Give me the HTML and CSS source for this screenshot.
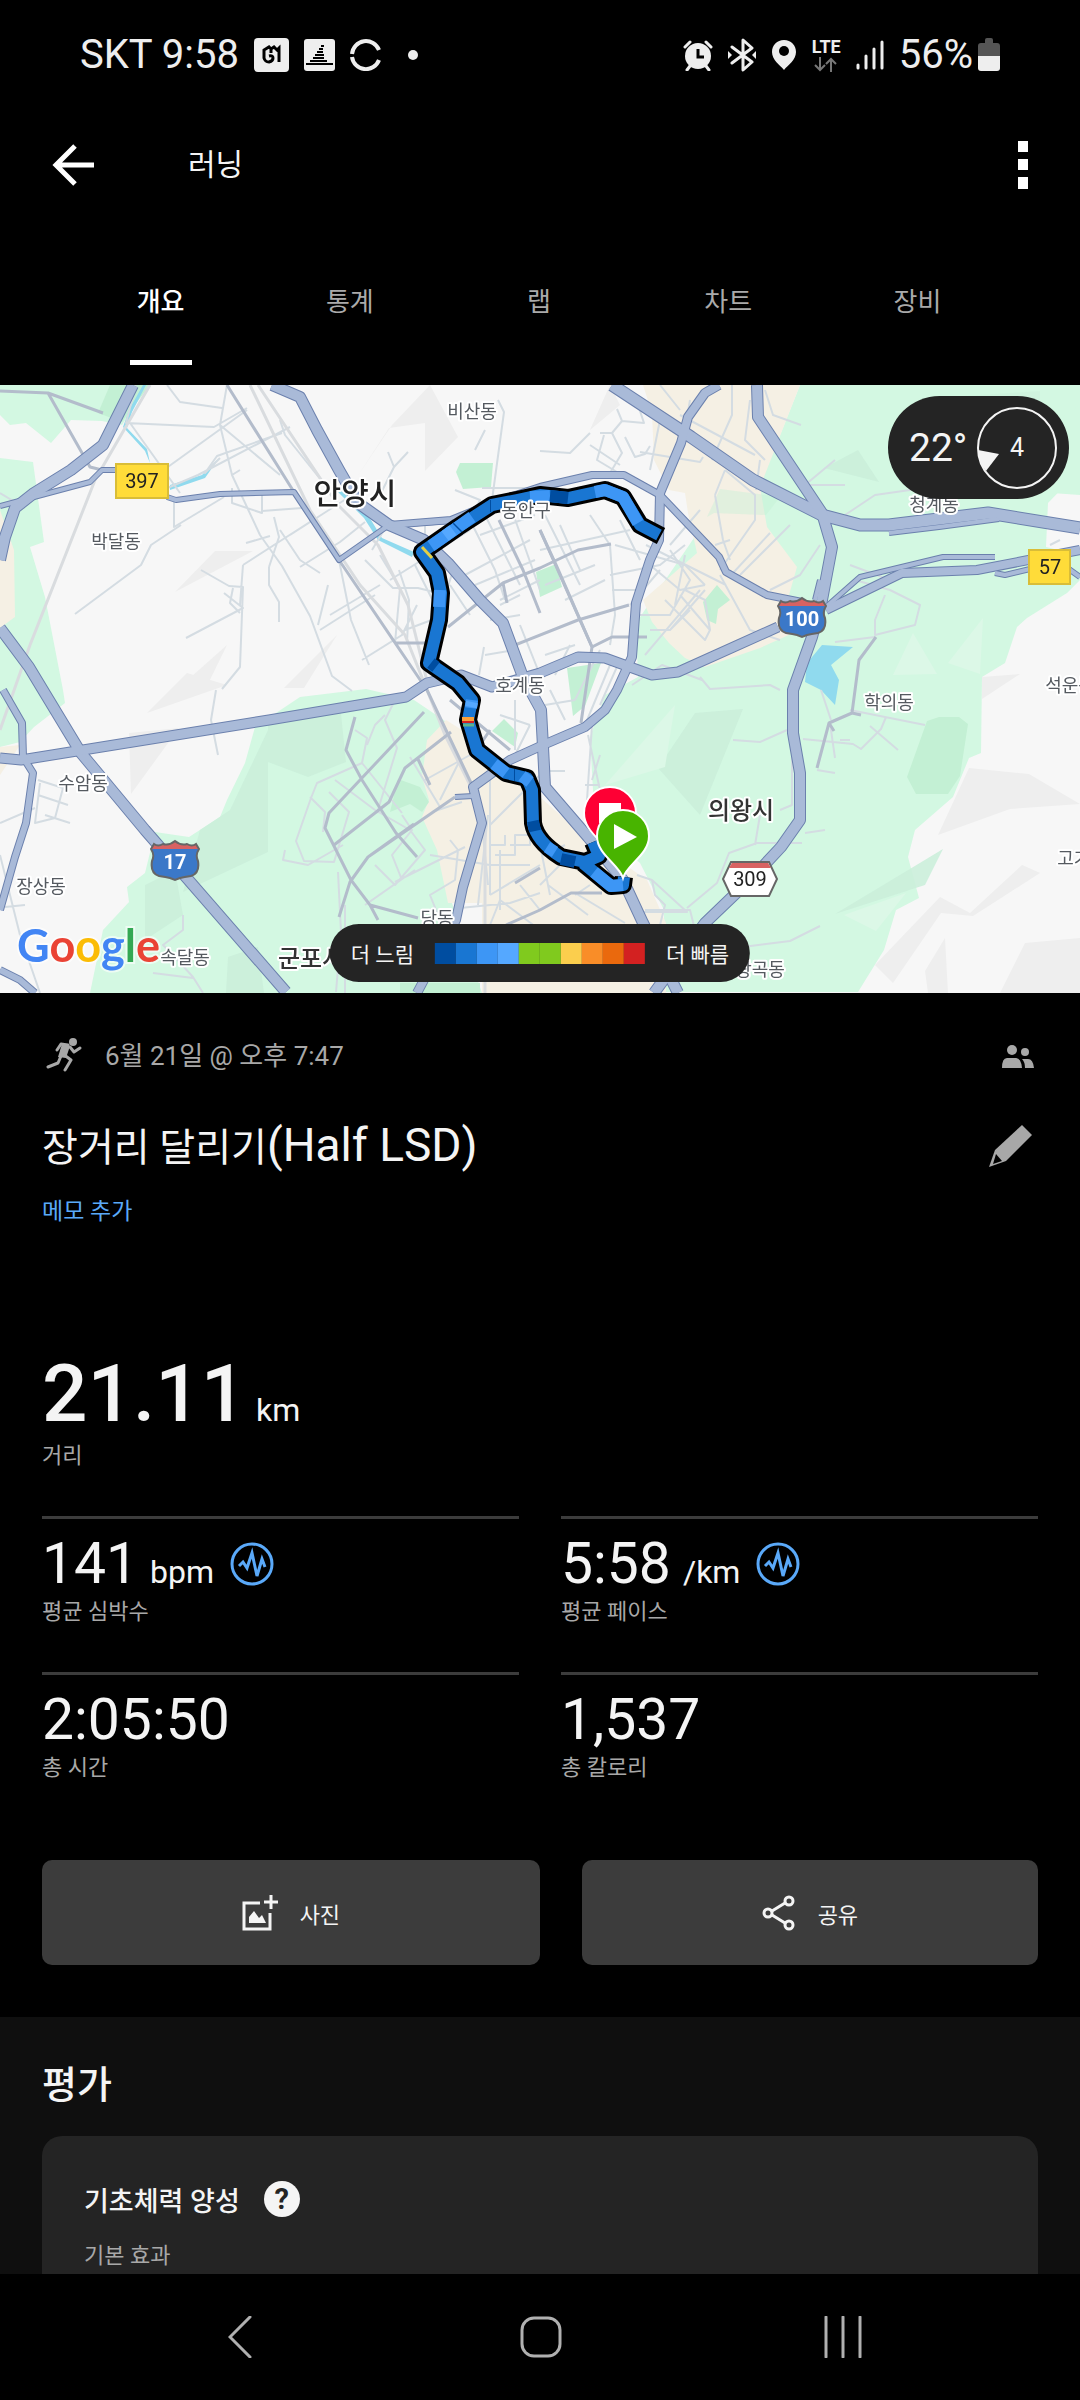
FILE: index.html
```html
<!DOCTYPE html>
<html lang="ko">
<head>
    <meta charset="UTF-8">
    <meta name="viewport" content="width=device-width, initial-scale=1.0">
    <title>러닝</title>
    <link rel="stylesheet" href="styles.css">
</head>
<body>

    <!-- 상태 표시줄 -->
    <div class="status-bar">
        <div class="status-left">
            <span class="status-text">SKT 9:58</span>
            <svg width="35" height="34" viewBox="0 0 35 34"><rect width="35" height="34" rx="4" fill="#eee"/><path d="M17 15v-4l-2-2-5 3v8q1 4 5 4 4-1 4-4t-4-2M17 11l3-2 3 3 2-2v14" fill="none" stroke="#000" stroke-width="3"/></svg>
            <svg width="31" height="32" viewBox="0 0 31 32"><rect width="31" height="32" rx="3" fill="#eee"/><path d="M17 7h3M15 10h4M13 13h6M11 16h9M9 19h11M6 22h17M2 25h27" stroke="#000" stroke-width="2"/></svg>
            <svg width="32" height="32" viewBox="0 0 32 32"><path d="M2 15a14 14 0 0 1 27-4M2 18a14 14 0 0 0 27 3" fill="none" stroke="#eee" stroke-width="4"/></svg>
            <span class="status-dot"></span>
        </div>
        <div class="status-right">
            <svg width="30" height="32" viewBox="0 0 30 32"><circle cx="15" cy="17" r="13" fill="#eee"/><path d="M2 8l5-5M28 8l-5-5M7 27l-3 4M23 27l3 4" stroke="#eee" stroke-width="3" stroke-linecap="round"/><path d="M15 10v8h6" fill="none" stroke="#000" stroke-width="3"/></svg>
            <svg width="28" height="34" viewBox="0 0 28 34"><path d="M4 9l20 15-9 8V2l9 8L4 25" fill="none" stroke="#eee" stroke-width="3" stroke-linejoin="round" stroke-linecap="round"/><path d="M0 13l4 4-4 4zM28 13l-4 4 4 4z" fill="#eee"/></svg>
            <svg width="26" height="32" viewBox="0 0 26 32"><path d="M13 1C6 1 1 6 1 13c0 8 8 13 12 18 4-5 12-10 12-18C25 6 20 1 13 1z" fill="#eee"/><circle cx="13" cy="12" r="5" fill="#000"/></svg>
            <span class="lte">LTE
                <svg width="24" height="15" viewBox="0 0 24 15"><path d="M6 0v13M1 8l5 5 5-5M17 15V2M12 7l5-5 5 5" fill="none" stroke="#777" stroke-width="2"/></svg>
            </span>
            <svg width="28" height="30" viewBox="0 0 28 30"><path d="M2 25v3M10 16v12M18 9v19M26 2v26" stroke="#eee" stroke-width="3" stroke-linecap="round"/></svg>
            <span class="status-text">56%</span>
            <svg class="battery" width="22" height="34" viewBox="0 0 22 34"><path d="M7 5V2q0-2 2-2h4q2 0 2 2v3h4q3 0 3 3v10H0V8q0-3 3-3z" fill="#555"/><path d="M0 18h22v12q0 3-3 3H3q-3 0-3-3z" fill="#eee"/></svg>
        </div>
    </div>

    <!-- 상단 바 -->
    <header class="app-bar">
        <button class="icon-button" aria-label="뒤로">
            <svg width="42" height="42" viewBox="0 0 42 42"><path d="M23 2L4 21l19 19M4 21h38" fill="none" stroke="#fff" stroke-width="5"/></svg>
        </button>
        <h1>러닝</h1>
        <button class="icon-button" aria-label="더 보기">
            <svg width="10" height="48" viewBox="0 0 10 48"><path d="M0 0h10v11H0zM0 18h10v11H0zM0 36h10v12H0z" fill="#fff"/></svg>
        </button>
    </header>

    <nav class="tabs">
        <button class="tab active">개요</button>
        <button class="tab">통계</button>
        <button class="tab">랩</button>
        <button class="tab">차트</button>
        <button class="tab">장비</button>
    </nav>

    <main>
        <!-- 지도 -->
        <div class="map">
            <svg class="map-canvas" viewBox="0 0 1080 608">
                <defs>
                    <symbol id="shield" viewBox="0 0 50 44">
                        <path d="M4 6q4 3 9 0q6 2 12-3q6 5 12 3q5 3 9 0l3 5q-4 6-1 12q2 12-7 15q-7 1-11 2l-5 2-5-2q-4-1-11-2Q0 35 2 23q3-6-1-12z" fill="#3b78c8"/>
                        <path d="M4 6q4 3 9 0q6 2 12-3q6 5 12 3q5 3 9 0l3 5H1z" fill="#d86262"/>
                        <path d="M4 6q4 3 9 0q6 2 12-3q6 5 12 3q5 3 9 0l3 5q-4 6-1 12q2 12-7 15q-7 1-11 2l-5 2-5-2q-4-1-11-2Q0 35 2 23q3-6-1-12z" fill="none" stroke="#666" stroke-width="2"/>
                    </symbol>
                </defs>

                <rect width="1080" height="608" fill="#f7f7f7"/>

                <!-- 녹지 -->
                <g fill="#d3f8e2">
                    <path d="M0 0h148l-26 40-20-4-31-1-20 23-25-20-16 2-10-10z"/>
                    <path d="M0 73l33 4 11 80-14 5 15 50 18 93 2 13-31 24-14 15-20 5z"/>
                    <path d="M300 312l-45 30-10 36-18 37-7 17-31 20-34-5-10 41-18 14 2 15-26 28-13 63h392l-30-90-11-53-15-33 7-17-7-23 5-37 17-17-34-23-48-11z"/>
                    <path d="M800 0h280v85l-32 33-2 44 34 8v25l-13 13-40 25-10 9-12 36-23 14-1 76-12 5-16 39-38 33-7 27 11 41-23 12-12 40-26 42H664V525l-24-47-45-38-5-88 15-42 33-18-2-54 60-88 60-40z"/>
                    <path d="M912 138l26-38 142 10v-90z"/>
                </g>
                <g fill="#f5f0e4">
                    <path d="M0 125l14 40 1 67-15 11zM0 362l20-2-20 30z"/>
                    <path d="M643 0h157l-40 102 7 40 30 40-8 28 11 35-40 18-55 19-20-9-16-15-17-21-9-22 54-47-9-40-3-20-16-3-15-30-2-47z"/>
                    <path d="M446 335l24 15 30 35 40 27 45 40 62 43 19 43v70H482V518h-34l-11-53-15-33 7-17-7-23 5-37z"/>
                </g>
                <g fill="#c3f0d4">
                    <path d="M110 0h40l-28 37-24-9z"/>
                    <path d="M456 87l4-9h33l-2 24-28 2z"/>
                    <path d="M703 217l14-17 13 15-12 9-2 15-9-4zM567 283l34-5-16 43-12 10zM492 346l12-12 14 14-3 14zM398 394l22 8 9 15-7 10-12-8-20 8z"/>
                    <path d="M927 336l12-4h20l9 7-8 52-12 18h-32l-9-17zM400 598h80v10h-80zM536 187l20-8 6 23-22 10z"/>
                    <path d="M720 104l60 8-14 18-52-2-7 4z" opacity=".4"/>
                </g>
                <g fill="#cbefdb" opacity=".9">
                    <path d="M268 337l72-18 6 58-38 15-40-15zM268 345v122l-85 40 17-62 30-20z"/>
                    <path d="M695 328l48-4-43 106-42-47zM824 83l34-18 21 32z"/>
                    <path d="M835 529l108-65-18 36zM145 500l30-15 8 45-38 25zM228 572l30-10 6 46h-38z"/>
                    <path d="M950 12l90-6v40l-70 20z" opacity=".5"/>
                </g>
                <g fill="#eee">
                    <path d="M392 40l38-40 28 52-33 34V38l-36 5-32 49zM175 207l40-41h38zM275 348l-5-18zM337 250l-33 53h-20zM182 300l45-40-22 45zM147 328l40-40 40 12z"/>
                    <path d="M129 348l50-5-48 66zM590 45l20-45 10 20zM938 450l31-67 60 6 51 30-70 5zM875 580l65-68 30 16 52-48 18 8-67 43-32-3-48 70zM1000 608l25-50 55-5v55zM925 586l20-33 3 55h-20zM982 292l38-3-38 25z"/>
                </g>
                <g fill="#dcf8e7">
                    <path d="M605 400l70-80-10 62zM893 290l20-42 24 41zM948 278l35-45-3 56zM844 530l62-22-30 38z"/>
                </g>
                <g fill="#90daee">
                    <path d="M822 260l31 2-22 18 8 15-4 25-14-15-16-8 2-19z"/>
                    <path d="M143 0l-14 25-6 17 22 24 5 12-3-14-20-21 5-16 14-27zM170 100l32-10 17-17-14 20-35 12zM341 105l30 30 11 18 32 14-2 5-34-17-14-22-28-28z"/>
                </g>

                <!-- 골목길 -->
                <g class="road-minor">
                    <path d="M0 108l25 15M130 38l50 70M136 0l-10 38 88 4 33-19M167 0l13 17 42 6M227 0l-7 40 12 50 28 60 22 31 28 50 22 60 20 15M220 40l60 50M247 25l-100 72M282 48l-65 23-12 17 15-15M290 42l-92 48-47 20M280 35l5 15 40 50M174 115v27l50-30M75 229l66-49 10-20 30-20M246 158l24-7M186 253l57-30-19-15M201 185l28 16 14 1-3 80-18 22M243 180l70-45M243 180l-3 40M233 203l-3 15 10 10M269 182l10-30-5-20M269 182v18l10 17v20M232 90l8-5M262 108v20l-30-10v-15M262 126l40-3M280 145l20 30 20 13M290 150l70-45M300 182l40-25 25-20M318 240l10-40M330 230l50-30M320 245l55-35M339 175l12 60 18 45M362 275l40-25 15-30M380 170l20 33-5 55M372 165l15-25M390 195l80-50M399 185l10 30-2 43M405 245l40-15M415 180l30 60M425 135v20M365 175l28 28h25l20 5"/>
                    <path d="M498 15l6 12-12 88M475 65l10-20M388 67l6 15 14-15M394 82l-14 28M482 103h58M455 105l25 10-10 20M470 135l25 50 10 30M485 130l35 70M465 190l65-35M475 200l60-25M480 150l55-20M510 120l30 85M500 215l40-20M520 240l20 50M450 200l20 30M455 180l-10 30M484 262l-5 28M490 235l30-5M485 270l30-5M500 220l20-10"/>
                    <path d="M540 66l30 2 20-20M600 48l12 0 10 20-12 20M612 48l10-12 22 2-10-30M622 36l-5-12M590 60l30 20M604 50l-7 25 25 15M625 52l10 20 10-3 5-8M650 85l10-50M640 67l60 10 3-5M660 0l20 25M690 15l-5 30M680 30l75 40M765 5l8 25 28 10M750 15l-5 40 20 20M732 0v30l-20 45M760 75l-4 30M715 110l10-25M725 85l30 25v25l-35 50M715 110l8 45 7 20M730 155l-15 5M733 188l37-40M740 190l50-50M770 205l30-15 20-30M726 200l-80-40M700 125l-30 35M720 190l30 55 30 10"/>
                    <path d="M545 130l35 70M560 140l20 45M540 165l90-20M545 200l50-20M590 130l20 30 5 70-5 30M565 215l40-20M610 190l50-10 25-20M612 205h30M615 160l70 20 20 20M640 175l-20-40M650 180l30 25 25-5M670 165l20 30-20 35-30 0M660 185l-30 35M685 170l-10 50M700 205l-55 65M650 245h20l35-40M665 215l40 40 5-10M680 210l30 35-5-30-20-10M690 225l-20 20M545 270l30-10M555 290l15-30M600 265l-25 50M610 280l-25 60M620 275l-20 45M545 320l30-5M550 305l15 30M700 292l10 12 60-4 10 5M632 300l30-20 40 15M592 340l-5 75M588 350l12 55M600 370l-8 25M550 386h15M585 400h15"/>
                    <path d="M0 438l35-15M40 398l-5 40 20-5 8-30-25-8M38 410l30 10M45 430l25 8M0 470l20 80 20 58M5 522l20-2M216 305l-5 30 7 35M183 530v15l-20 15 10 10 20 22 10 16M153 588l40 5M338 487l3 60-5 60M345 520v90"/>
                    <path d="M355 345l12 8-5 25-45 20-6 15-15 43 8 20 30 1 15-50-20-20M362 378l40 50M335 395l40 30M385 330l-10 10-8 20M395 315l-10 20 12 28-20 65M310 412l15 15-2 20M285 465l-2 10 25 5 35-20M375 425l35 20 15 20-30 35-20-20M395 497l70-35M365 520l50-35M410 372l30 50M440 415l20-40M402 430l10 15-20 25 10 25M425 395l45-25M430 470l60 10M432 427l30-10M450 455l8 10-3 30-25 15 10 25M490 440l50-50M490 460h15v-10M510 460h20v-10h-15v20h-20M490 480h40M500 465v60M540 480l-50 30M460 523l50-5 30-10M490 540l10-25 40 30M520 500l20 25M488 430l-10 90M470 350l20 20v140M478 400l10 100M500 330l30 10M515 315v50M530 340l-20 40"/>
                    <path d="M545 470l20-10M548 500l40 30M560 480l-20 20M575 508l50 30M540 460l10 50M590 500l-15 10M637 490l15 5 35 32-45 0M652 495l3 15 10 10-5 20M645 525l45 0 5 20 20 5M687 523l30-25 12-30 28-10h30l15 0M755 460l5-30M780 425l12-5v-80M733 355l27 2 27-12M735 563l55-7 30-15M805 448l20-3M840 355h10M803 354l50 5 8 5 20-20 5-12M821 305l10 30M850 325l75 15M870 341l28 24M817 385l18 3M830 338l5 35M835 75l-30 25 40 0"/>
                    <path d="M845 130l30-20 35-5 10-10M885 210l-10 25v15l40-10 5-20-30-15-35-10M835 257l40-5M850 180l40 15M1050 160l10-5"/>
                </g>
                <g class="road-rail">
                    <path d="M150 0l-55 95L30 260 0 345M250 0l60 125 50 75 45 50 40 100 25 50 15 40v168M258 0l20 30 60 90 40 40 30 60 20 80"/>
                </g>

                <!-- 간선도로 -->
                <g class="road-mid">
                    <path d="M0 6l48 2 55 20M48 8l42 74 12 3M227 0l67 107M339 175l88 130 45 95M396 258h30M448 242l55-44 37-15 38-18 33-6M499 135l24 50 17 43M540 145l17 37 35 80-11 76M510 262l68-27 51-15"/>
                    <path d="M592 262l20-10h35M540 145l52 117M503 198l4 20"/>
                    <path d="M355 332l-9 33 16 30 34 53 21 24M424 327l-95 101-4 15 26 52 19 25 48 13M451 347l-46 36-16 34-55 43M455 412l-87 60-18 25-11 35M417 372l13 28M378 535l-8-15M368 472l46-33M450 315l60 50M490 345l-10 15M515 498l25-15M506 540l34-15M540 525l31-17h31"/>
                    <path d="M876 252l-17 23-7 53-23 10-12 45M829 338l5 8M852 328l9 2"/>
                </g>

                <!-- 고속도로: 테두리와 면 -->
                <g class="road-edge">
                    <path class="w9" d="M133 0l-30 60-32 25-37 23-19 15-10 29-5 23"/>
                    <path class="w5" d="M0 121l34-9 56-15 12-12h30M167 112l9 3 44-6 74-2 45 68 50-35M389 140l62-4"/>
                    <path class="w9" d="M272 0l28 12 17 33 22 40 19 33 31 22 35 15 24 23 32 37 23 23 20 54 18 33 2 37 2 40 43 50 35 43 20 43 35 70"/>
                    <path class="w6" d="M389 140l62-5 49-20 40-13 52-12h32l36 20 59 62 7 15 41 23 35 7"/>
                    <path class="w10" d="M612 0l79 52 62 43 69 35 38 10h29l99-12 92 15"/>
                    <path class="w5" d="M889 148l50-6 60-8"/>
                    <path class="w7" d="M719 0l-14 8-17 24-7 26-21 50-1 47-9 20-14 43-4 54-15 33-12 20-20 17-42 18-33 15-37 27 9 36-19 64-7 33-39 73"/>
                    <path class="w9" d="M757 0l1 32 64 96 10 34-10 53-10 37-19 53v43l7 40v47l-19 27-28 30-48 46-51 70"/>
                    <path class="w9" d="M0 243l29 39 52 86 64 77 141 162"/>
                    <path class="w8" d="M0 373l21 2 62-10 186-30 137-23 21-14 34-8 31 12 48-14 38-16 27 1 47 17 26-3 100-45"/>
                    <path class="w6" d="M3 305l19 33 1 34 10 16-7 50-11 34-15 53M0 585l20 10 15 13"/>
                    <path class="w5" d="M826 222l34-30 83-20h52"/>
                    <path class="w7" d="M826 225l76-37 75-3 103-20"/>
                    <path class="w5" d="M995 188l10 2 25-6M1066 182l14 10M455 412l18-1M820 195l-5 20"/>
                </g>
                <g class="road-fill">
                    <path class="w9" d="M133 0l-30 60-32 25-37 23-19 15-10 29-5 23"/>
                    <path class="w5" d="M0 121l34-9 56-15 12-12h30M167 112l9 3 44-6 74-2 45 68 50-35M389 140l62-4"/>
                    <path class="w9" d="M272 0l28 12 17 33 22 40 19 33 31 22 35 15 24 23 32 37 23 23 20 54 18 33 2 37 2 40 43 50 35 43 20 43 35 70"/>
                    <path class="w6" d="M389 140l62-5 49-20 40-13 52-12h32l36 20 59 62 7 15 41 23 35 7"/>
                    <path class="w10" d="M612 0l79 52 62 43 69 35 38 10h29l99-12 92 15"/>
                    <path class="w5" d="M889 148l50-6 60-8"/>
                    <path class="w7" d="M719 0l-14 8-17 24-7 26-21 50-1 47-9 20-14 43-4 54-15 33-12 20-20 17-42 18-33 15-37 27 9 36-19 64-7 33-39 73"/>
                    <path class="w9" d="M757 0l1 32 64 96 10 34-10 53-10 37-19 53v43l7 40v47l-19 27-28 30-48 46-51 70"/>
                    <path class="w9" d="M0 243l29 39 52 86 64 77 141 162"/>
                    <path class="w8" d="M0 373l21 2 62-10 186-30 137-23 21-14 34-8 31 12 48-14 38-16 27 1 47 17 26-3 100-45"/>
                    <path class="w6" d="M3 305l19 33 1 34 10 16-7 50-11 34-15 53M0 585l20 10 15 13"/>
                    <path class="w5" d="M826 222l34-30 83-20h52"/>
                    <path class="w7" d="M826 225l76-37 75-3 103-20"/>
                    <path class="w5" d="M995 188l10 2 25-6M1066 182l14 10M455 412l18-1M820 195l-5 20"/>
                </g>

                <!-- 달린 경로 -->
                <g fill="none" stroke-linejoin="round">
                    <path d="M661 151l-21-11-17-28-18-7-37 8-28-3-23 5-25 5-34 22-36 25 15 21 4 20-2 27-10 43 29 20 14 17-4 20 9 30 29 23 21 5 5 12 1 33q3 18 28 34l24 5 14-6-6-14M583 478l28 23 12-1 1-8" stroke="#000" stroke-width="18"/>
                    <path d="M659 150l-19-10-17-28-18-7-37 8-28-3-23 5-25 5-34 22-36 25 15 21 4 20-2 27-10 43 29 20 14 17-4 20 9 30 29 23 21 5 5 12 1 33q3 18 28 34l24 5 14-6-6-14M583 478l28 23 12-1 1-8" stroke="#1976d2" stroke-width="12"/>
                    <path d="M638 138l-15-26-18-7-10 2M550 111l-20 1M472 132l-14 10-27 19M440 205l-1 17M472 315l-1 8M494 379l12 9M522 391l8 6M594 487l17 14 12-1M547 462l8 5" stroke="#3d96f5" stroke-width="12"/>
                    <path d="M453 145l-8 6M472 317l-1 5" stroke="#55a8ff" stroke-width="12"/>
                    <path d="M568 113l-18-2M533 436l2 10M561 474l14 3M514 390h1M431 278l5 4M490 121h1M457 143l1-1" stroke="#004da0" stroke-width="12"/>
                    <path d="M422 162l10 11" stroke="#e3cf45" stroke-width="3"/>
                    <path d="M462 334h12" stroke="#f9a13c" stroke-width="4"/>
                    <path d="M462 337h12" stroke="#d32020" stroke-width="2"/>
                    <path d="M463 340h11" stroke="#5fb58a" stroke-width="3"/>
                </g>

                <!-- 도로 번호 -->
                <g class="sign">
                    <rect x="116" y="79" width="52" height="34" fill="#ffdc39" stroke="#d9bd38" stroke-width="2"/>
                    <text x="142" y="103">397</text>
                    <rect x="1029" y="165" width="41" height="34" fill="#ffdc39" stroke="#d9bd38" stroke-width="2"/>
                    <text x="1050" y="189">57</text>
                    <use href="#shield" x="777" y="210" width="50" height="44"/>
                    <text class="light" x="802" y="241">100</text>
                    <use href="#shield" x="150" y="453" width="50" height="44"/>
                    <text class="light" x="175" y="484">17</text>
                    <path d="M731 477h38l8 17-8 17h-38l-8-17z" fill="#fff" stroke="#666" stroke-width="2"/>
                    <path d="M732 478h36l3 5h-42z" fill="#d86262"/>
                    <text x="750" y="501">309</text>
                </g>

                <!-- 지명 -->
                <g class="place">
                    <text x="472" y="33">비산동</text>
                    <text x="116" y="163">박달동</text>
                    <text x="526" y="132">동안구</text>
                    <text x="520" y="307">호계동</text>
                    <text x="934" y="126">청계동</text>
                    <text x="1070" y="307">석운동</text>
                    <text x="889" y="324">학의동</text>
                    <text x="1082" y="480">고기동</text>
                    <text x="83" y="405">수암동</text>
                    <text x="41" y="508">장상동</text>
                    <text x="437" y="540">당동</text>
                    <text x="185" y="579">속달동</text>
                    <text x="760" y="591">왕곡동</text>
                    <text class="city" x="355" y="119">안양시</text>
                    <text class="town" x="741" y="434">의왕시</text>
                    <text class="town" x="311" y="582">군포시</text>
                </g>

                <!-- 도착, 출발 핀 -->
                <path d="M610 470c-6-14-26-23-26-42a26 26 0 0 1 52 0c0 19-20 28-26 42z" fill="#fe0034" stroke="#fff" stroke-width="2"/>
                <rect x="599" y="418" width="22" height="20" fill="#fff"/>
                <path d="M623 493c-4-14-26-23-26-42a26 26 0 0 1 52 0c0 19-22 28-26 42z" fill="#48b400" stroke="#fff" stroke-width="2"/>
                <path d="M614 439v25l23-12z" fill="#fff"/>

                <text class="google" x="17" y="577"><tspan fill="#4285f4">G</tspan><tspan fill="#ea4335">o</tspan><tspan fill="#fbbc05">o</tspan><tspan fill="#4285f4">g</tspan><tspan fill="#34a853">l</tspan><tspan fill="#ea4335">e</tspan></text>
            </svg>

            <div class="weather">
                <span class="temp">22°</span>
                <span class="wind">
                    <svg viewBox="0 0 82 84"><ellipse cx="41" cy="42" rx="39" ry="40" fill="none" stroke="#f4f4f4" stroke-width="2"/><path d="M2 44l21 4-13 17q-7-8-8-21z" fill="#f4f4f4"/></svg>
                    <span>4</span>
                </span>
            </div>

            <div class="legend">
                <span>더 느림</span>
                <div class="legend-colors">
                    <i class="c1"></i><i class="c2"></i><i class="c3"></i><i class="c4"></i><i class="c5"></i><i class="c5"></i><i class="c6"></i><i class="c7"></i><i class="c8"></i><i class="c9"></i>
                </div>
                <span>더 빠름</span>
            </div>
        </div>

        <!-- 활동 요약 -->
        <section class="activity">
            <div class="meta">
                <svg width="36" height="36" viewBox="0 0 36 36"><circle cx="27" cy="4" r="4" fill="#a8a8a8"/><path d="M11 12l4-6 7 1M24 9l4 5 6-4M17 16l8 6-6 10M15 18l-3 7-10 4" fill="none" stroke="#a8a8a8" stroke-width="3" stroke-linejoin="round" stroke-linecap="round"/><path d="M16 6l8 2-4 12-8-1z" fill="#a8a8a8"/></svg>
                <span class="date">6월 21일 @ 오후 7:47</span>
                <svg class="people" width="32" height="24" viewBox="0 0 32 24"><g fill="#a8a8a8"><circle cx="10" cy="6" r="5"/><circle cx="23" cy="8" r="4"/><path d="M0 24q0-10 5-10h9q5 0 6 10zM20 15h6q5 0 6 9h-9q0-6-3-9z"/></g></svg>
            </div>
            <div class="title-row">
                <h2><span class="ko">장거리 달리기</span>(Half LSD)</h2>
                <button class="icon-button" aria-label="제목 편집">
                    <svg width="46" height="44" viewBox="0 0 46 44"><path d="M34 1l10 10-26 26L1 43l6-17z" fill="#a8a8a8"/><path d="M8 30l6 7-9 3z" fill="#000"/></svg>
                </button>
            </div>
            <a class="memo" href="#memo">메모 추가</a>

            <div class="stat-main">
                <div class="value">21.11 <small>km</small></div>
                <div class="label">거리</div>
            </div>

            <div class="stats">
                <div class="stat">
                    <div class="value">141 <small>bpm</small>
                        <svg class="pulse" viewBox="0 0 44 44"><circle cx="22" cy="22" r="20"/><path d="M9 24l4-4 4 6 5-15 5 23 5-17 3 8"/></svg>
                    </div>
                    <div class="label">평균 심박수</div>
                </div>
                <div class="stat">
                    <div class="value">5:58 <small>/km</small>
                        <svg class="pulse" viewBox="0 0 44 44"><circle cx="22" cy="22" r="20"/><path d="M9 24l4-4 4 6 5-15 5 23 5-17 3 8"/></svg>
                    </div>
                    <div class="label">평균 페이스</div>
                </div>
                <div class="stat">
                    <div class="value">2:05:50</div>
                    <div class="label">총 시간</div>
                </div>
                <div class="stat">
                    <div class="value">1,537</div>
                    <div class="label">총 칼로리</div>
                </div>
            </div>

            <div class="actions">
                <button>
                    <svg width="36" height="36" viewBox="0 0 36 36"><path d="M18 8H2v26h26V18" fill="none" stroke="#f4f4f4" stroke-width="3"/><path d="M22 7h14M29 0v14" stroke="#f4f4f4" stroke-width="3"/><path d="M7 28v-6l5-6 5 7 3-3 4 8z" fill="#f4f4f4"/></svg>
                    사진
                </button>
                <button>
                    <svg width="34" height="36" viewBox="0 0 34 36"><g fill="none" stroke="#f4f4f4" stroke-width="3"><circle cx="27" cy="6" r="4"/><circle cx="6" cy="18" r="4"/><circle cx="27" cy="30" r="4"/><path d="M10 16l13-8M10 20l13 8"/></g></svg>
                    공유
                </button>
            </div>
        </section>

        <!-- 평가 -->
        <section class="review">
            <h2>평가</h2>
            <div class="card">
                <div class="card-title">
                    <h3>기초체력 양성</h3>
                    <button class="help" aria-label="도움말">?</button>
                </div>
                <p>기본 효과</p>
            </div>
        </section>
    </main>

    <!-- 하단 내비게이션 -->
    <nav class="nav-bar">
        <button aria-label="이전"><svg width="24" height="42" viewBox="0 0 24 42"><path d="M22 1L2 21l20 20"/></svg></button>
        <button aria-label="홈"><svg width="42" height="42" viewBox="0 0 42 42"><rect x="2" y="2" width="38" height="38" rx="12"/></svg></button>
        <button aria-label="최근 앱"><svg width="38" height="42" viewBox="0 0 38 42"><path d="M2 1v40M19 1v40M36 1v40"/></svg></button>
    </nav>

</body>
</html>
```

FILE: styles.css
```css
* {
    box-sizing: border-box;
}

body {
    margin: 0;
    height: 100vh;
    display: flex;
    flex-direction: column;
    background-color: #000;
    color: #f4f4f4;
    font-family: Roboto, "Noto Sans CJK KR", sans-serif;
}

h1, h2, h3, p {
    margin: 0;
    font-weight: 400;
}

button {
    padding: 0;
    border: none;
    background: none;
    color: inherit;
    font-family: inherit;
    cursor: pointer;
}

svg {
    display: block;
    flex: none;
}

/* 상태 표시줄 */
.status-bar {
    display: flex;
    justify-content: space-between;
    align-items: center;
    height: 110px;
    padding: 0 80px;
    color: #eee;
}

.status-left,
.status-right {
    display: flex;
    align-items: center;
    gap: 15px;
}

.status-text {
    font-size: 40px;
    line-height: 40px;
}

.status-dot {
    width: 10px;
    height: 10px;
    margin-left: 11px;
    border-radius: 50%;
    background-color: #eee;
}

.lte {
    display: flex;
    flex-direction: column;
    align-items: center;
    gap: 2px;
    font-size: 18px;
    font-weight: 700;
    line-height: 17px;
}

.battery {
    margin-left: -10px;
}

/* 상단 바 */
.app-bar {
    display: flex;
    align-items: center;
    height: 110px;
    padding: 0 52px;
}

.app-bar h1 {
    flex: 1;
    margin-left: 94px;
    font-size: 30px;
    line-height: 40px;
}

/* 탭 */
.tabs {
    display: flex;
    height: 165px;
    padding: 0 68px 0 66px;
}

.tab {
    flex: 1;
    display: flex;
    flex-direction: column;
    align-items: center;
    padding-top: 62px;
    color: #aaa;
    font-size: 26px;
    line-height: 40px;
}

.tab.active {
    color: #fff;
    font-weight: 500;
}

.tab.active::after {
    content: "";
    width: 62px;
    height: 5px;
    margin-top: 38px;
    background-color: #fff;
}

main {
    flex: 1;
    min-height: 0;
    overflow: hidden;
}

/* 지도 */
.map {
    position: relative;
}

.map-canvas {
    width: 100%;
    height: auto;
}

.road-minor,
.road-mid,
.road-rail,
.road-edge,
.road-fill {
    fill: none;
    stroke-linejoin: round;
}

.road-minor {
    stroke: #d4dce2;
    stroke-width: 2;
}

.road-rail {
    stroke: #d9dcdf;
    stroke-width: 3;
}

.road-mid {
    stroke: #b3bccb;
    stroke-width: 3;
}

.road-edge {
    stroke: #6b80ad;
}

.road-fill {
    stroke: #a9bad8;
}

.road-edge .w5 { stroke-width: 6; }
.road-edge .w6 { stroke-width: 8; }
.road-edge .w7 { stroke-width: 10; }
.road-edge .w8 { stroke-width: 11; }
.road-edge .w9 { stroke-width: 12; }
.road-edge .w10 { stroke-width: 13; }

.road-fill .w5 { stroke-width: 4; }
.road-fill .w6 { stroke-width: 6; }
.road-fill .w7 { stroke-width: 8; }
.road-fill .w8 { stroke-width: 9; }
.road-fill .w9 { stroke-width: 10; }
.road-fill .w10 { stroke-width: 11; }

.sign {
    fill: #222;
    font-size: 20px;
    text-anchor: middle;
}

.sign .light {
    fill: #fff;
    font-weight: 700;
}

.place {
    fill: #555a60;
    stroke: #fff;
    stroke-width: 4px;
    stroke-linejoin: round;
    paint-order: stroke;
    font-size: 18px;
    text-anchor: middle;
}

.place .city {
    fill: #222;
    font-size: 30px;
    font-weight: 500;
}

.place .town {
    fill: #333;
    font-size: 24px;
    font-weight: 500;
}

.google {
    font-family: Lato, sans-serif;
    font-size: 45px;
    font-weight: 700;
    stroke: #fff;
    stroke-opacity: .6;
    stroke-width: 4px;
    paint-order: stroke;
}

.weather {
    position: absolute;
    top: 11px;
    right: 11px;
    display: flex;
    align-items: center;
    justify-content: space-between;
    width: 181px;
    height: 103px;
    padding: 0 11px 0 21px;
    border-radius: 52px;
    background-color: #242424;
}

.temp {
    font-size: 39px;
}

.wind {
    display: grid;
    place-items: center;
    font-size: 25px;
}

.wind > * {
    grid-area: 1 / 1;
}

.wind svg {
    width: 82px;
    height: 84px;
}

.legend {
    position: absolute;
    bottom: 11px;
    left: 50%;
    transform: translateX(-50%);
    display: flex;
    align-items: center;
    gap: 21px;
    height: 58px;
    padding: 0 21px;
    border-radius: 29px;
    background-color: #242424;
    font-size: 21px;
    white-space: nowrap;
}

.legend-colors {
    display: flex;
}

.legend-colors i {
    width: 21px;
    height: 21px;
}

.c1 { background-color: #004da0; }
.c2 { background-color: #1976d2; }
.c3 { background-color: #3d96f5; }
.c4 { background-color: #55a8ff; }
.c5 { background-color: #80ca1e; }
.c6 { background-color: #fbce4d; }
.c7 { background-color: #f98d28; }
.c8 { background-color: #ea690d; }
.c9 { background-color: #d32121; }

/* 활동 요약 */
.activity {
    padding: 36px 42px 52px;
}

.meta {
    display: flex;
    align-items: center;
    height: 54px;
    padding: 0 4px;
    color: #a8a8a8;
}

.date {
    flex: 1;
    margin-left: 23px;
    font-size: 26px;
    line-height: 32px;
}

.title-row {
    display: flex;
    align-items: center;
    justify-content: space-between;
    height: 60px;
    margin-top: 33px;
    padding-right: 4px;
}

.title-row h2 {
    font-size: 46px;
    line-height: 60px;
}

.title-row .ko {
    font-size: 39px;
}

.memo {
    display: block;
    margin-top: 20px;
    color: #5aa9f9;
    font-size: 23px;
    line-height: 32px;
    text-decoration: none;
}

.value {
    display: flex;
    align-items: baseline;
}

.value small {
    font-size: 32px;
    font-weight: 400;
    line-height: 32px;
}

.label {
    color: #a8a8a8;
    font-size: 22px;
    line-height: 32px;
}

.stat-main {
    margin-top: 126px;
}

.stat-main .value {
    gap: 10px;
    height: 80px;
    margin-bottom: 6px;
    font-size: 80px;
    font-weight: 500;
    line-height: 80px;
}

.stats {
    display: grid;
    grid-template-columns: 1fr 1fr;
    column-gap: 42px;
    margin-top: 44px;
}

.stat {
    height: 156px;
    padding-top: 17px;
    border-top: 3px solid #3c3c3c;
}

.stat .value {
    gap: 12px;
    height: 56px;
    margin-bottom: 4px;
    font-size: 57px;
    line-height: 56px;
}

.pulse {
    align-self: center;
    width: 44px;
    height: 44px;
    margin-left: 4px;
    fill: none;
    stroke: #5aa9f9;
    stroke-width: 3;
}

.actions {
    display: grid;
    grid-template-columns: 12fr 11fr;
    gap: 42px;
    margin-top: 32px;
}

.actions button {
    display: flex;
    align-items: center;
    justify-content: center;
    gap: 22px;
    height: 105px;
    border-radius: 10px;
    background-color: #3c3c3c;
    font-size: 22px;
}

/* 평가 */
.review {
    padding: 44px 42px 0;
    background-color: #0f0f0f;
}

.review h2 {
    font-size: 38px;
    font-weight: 500;
    line-height: 48px;
}

.card {
    height: 300px;
    margin-top: 27px;
    padding: 42px;
    border-radius: 20px;
    background-color: #242424;
}

.card-title {
    display: flex;
    align-items: center;
    gap: 24px;
    height: 42px;
}

.card h3 {
    font-size: 27px;
    font-weight: 500;
}

.help {
    width: 36px;
    height: 36px;
    border-radius: 50%;
    background-color: #f4f4f4;
    color: #242424;
    font-size: 29px;
    font-weight: 700;
    line-height: 36px;
}

.card p {
    margin-top: 20px;
    color: #a8a8a8;
    font-size: 22px;
    line-height: 32px;
}

/* 하단 내비게이션 */
.nav-bar {
    display: grid;
    grid-template-columns: repeat(3, 1fr);
    height: 126px;
    padding: 0 86px 0 89px;
}

.nav-bar button {
    display: grid;
    place-items: center;
}

.nav-bar svg {
    fill: none;
    stroke: #b0b0b0;
    stroke-width: 3;
    stroke-linecap: round;
}
```
